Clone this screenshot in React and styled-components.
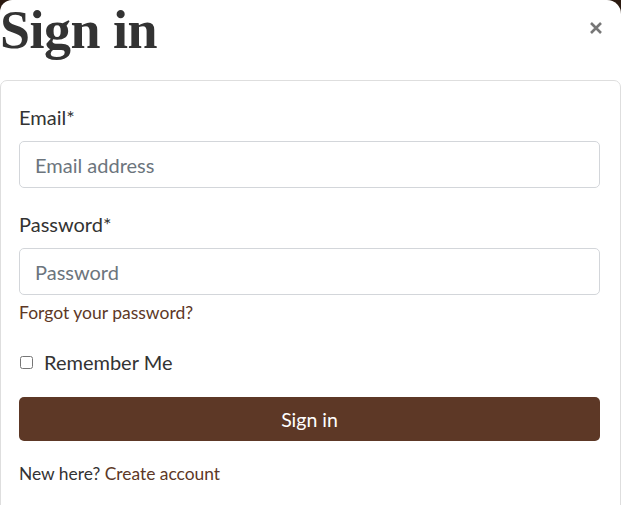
import React from "react";
import styled, { createGlobalStyle } from "styled-components";

const GlobalStyle = createGlobalStyle`
  html, body {
    margin: 0;
    padding: 0;
    background: #2b1a10;
  }
  * {
    box-sizing: border-box;
  }
`;

const Backdrop = styled.div`
  width: 621px;
  height: 505px;
  background: #2b1a10;
  overflow: hidden;
`;

const Modal = styled.div`
  width: 621px;
  height: 505px;
  background: #fff;
  border-radius: 12px 14px 0 0;
  overflow: hidden;
  display: flex;
  flex-direction: column;
  font-family: Lato, "Liberation Sans", sans-serif;
  color: #333;
`;

const Header = styled.div`
  height: 80px;
  display: flex;
  align-items: flex-start;
  justify-content: space-between;
  padding-right: 16px;
`;

const Title = styled.h1`
  margin: 0;
  margin-top: -2px;
  font-family: "Liberation Serif", "DejaVu Serif", serif;
  font-weight: 700;
  font-size: 54px;
  line-height: 64px;
  letter-spacing: -0.5px;
  color: #333;
`;

const Close = styled.button`
  margin-top: 19px;
  width: 18px;
  height: 18px;
  padding: 0;
  border: none;
  background: none;
  display: flex;
  align-items: center;
  justify-content: center;
  cursor: pointer;
`;

const Body = styled.form`
  flex: 1;
  margin-bottom: -8px;
  border: 1px solid #dedede;
  border-radius: 7px;
  padding: 23px 20px 0 18px;
  display: flex;
  flex-direction: column;
`;

const Label = styled.label`
  display: block;
  font-size: 20px;
  line-height: 27px;
  margin-top: ${(p) => p.$top || 0}px;
  margin-bottom: 10px;
`;

const Input = styled.input`
  width: 100%;
  height: 47px;
  border: 1px solid #d3d6da;
  border-radius: 5px;
  padding: 0 15px;
  font-family: Lato, "Liberation Sans", sans-serif;
  font-size: 20px;
  color: #333;
  outline: none;
  &::placeholder {
    color: #6c757d;
  }
`;

const TextLink = styled.a`
  color: #5d3826;
  text-decoration: none;
`;

const Forgot = styled.div`
  margin-top: 6px;
  font-size: 17.5px;
  line-height: 24px;
`;

const CheckRow = styled.label`
  margin-top: 24px;
  display: flex;
  align-items: center;
  gap: 11px;
  font-size: 20px;
  line-height: 27px;
  padding-left: 1px;
`;

const Check = styled.input`
  margin: 0;
  width: 13px;
  height: 13px;
`;

const SubmitButton = styled.button`
  margin-top: 21px;
  width: 100%;
  height: 44px;
  border: none;
  border-radius: 5px;
  background: #5d3826;
  color: #fff;
  font-family: Lato, "Liberation Sans", sans-serif;
  font-size: 19.5px;
  cursor: pointer;
`;

const Footer = styled.p`
  margin: 21px 0 0;
  font-size: 17.4px;
  line-height: 24px;
  color: #333;
`;

export default function App() {
  return (
    <Backdrop>
      <GlobalStyle />
      <Modal>
        <Header>
          <Title>Sign in</Title>
          <Close aria-label="Close">
            <svg width="14" height="14" viewBox="0 0 14 14">
              <path
                d="M2 2 L12 12 M12 2 L2 12"
                stroke="#777"
                strokeWidth="2.6"
                strokeLinecap="butt"
              />
            </svg>
          </Close>
        </Header>
        <Body onSubmit={(e) => e.preventDefault()}>
          <Label htmlFor="email">Email*</Label>
          <Input id="email" type="email" placeholder="Email address" />
          <Label htmlFor="password" $top={23}>
            Password*
          </Label>
          <Input id="password" type="password" placeholder="Password" />
          <Forgot>
            <TextLink href="#">Forgot your password?</TextLink>
          </Forgot>
          <CheckRow>
            <Check type="checkbox" />
            Remember Me
          </CheckRow>
          <SubmitButton type="submit">Sign in</SubmitButton>
          <Footer>
            New here? <TextLink href="#">Create account</TextLink>
          </Footer>
        </Body>
      </Modal>
    </Backdrop>
  );
}
